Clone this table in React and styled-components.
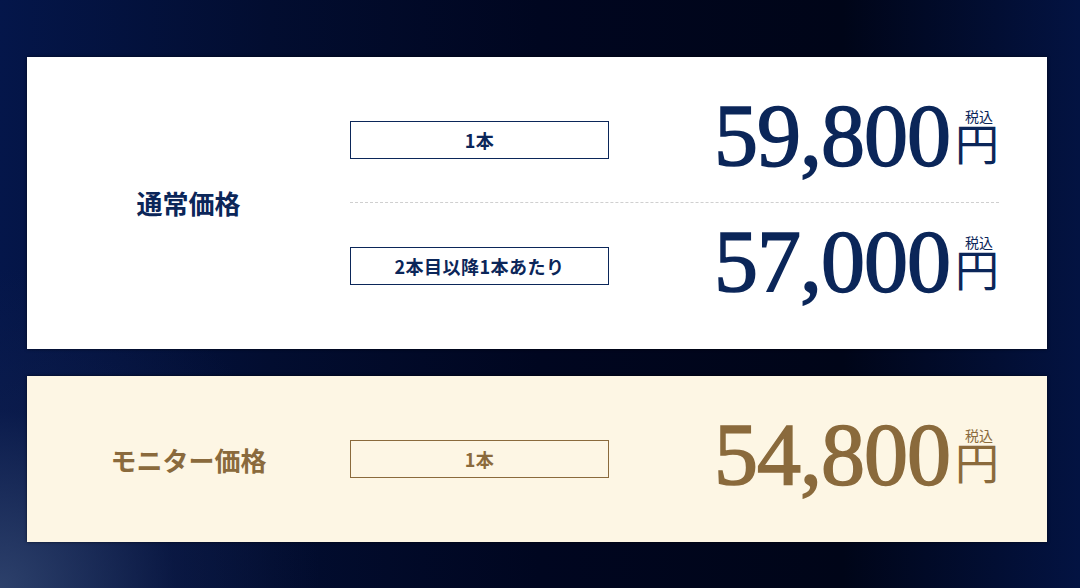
import React from 'react';
import styled, { createGlobalStyle } from 'styled-components';

const GlobalStyle = createGlobalStyle`
  html, body {
    margin: 0;
    padding: 0;
  }
  body {
    font-family: "Noto Sans CJK JP", "Noto Sans", sans-serif;
  }
`

const Page = styled.div`
  box-sizing: border-box;
  width: 1080px;
  height: 588px;
  padding: 57px 33px 0 27px;
  display: flex;
  flex-direction: column;
  gap: 27px;
  background:
    radial-gradient(ellipse 320px 320px at 0% 100%, rgba(55, 75, 115, 0.8), rgba(20, 35, 80, 0.4) 55%, rgba(0, 0, 0, 0) 100%),
    linear-gradient(90deg, #04164a 0%, #020d30 25%, #000620 50%, #000518 78%, #031342 100%);
  overflow: hidden;
`

const Card = styled.div`
  display: grid;
  grid-template-columns: 323px 1fr;
  align-items: center;
  background: ${p => p.$bg};
  padding: ${p => p.$pad};
  box-shadow: 0 0 3px rgba(0, 0, 0, 0.6);
`

const Label = styled.div`
  text-align: center;
  font-size: 26px;
  font-weight: 700;
  color: ${p => p.$color};
`

const Rows = styled.div`
  display: flex;
  flex-direction: column;
  padding-right: 48px;
`

const Row = styled.div`
  display: flex;
  align-items: center;
  justify-content: space-between;
  height: ${p => p.$h}px;
  border-top: ${p => (p.$divided ? '1px dashed #cfcfcf' : 'none')};
`

const Badge = styled.div`
  box-sizing: border-box;
  width: 259px;
  height: 38px;
  display: flex;
  align-items: center;
  justify-content: center;
  border: 1.5px solid ${p => p.$color};
  color: ${p => p.$color};
  font-size: 18px;
  font-weight: 700;
  letter-spacing: 0.5px;
  background: transparent;
`

const Price = styled.div`
  display: flex;
  align-items: flex-end;
  margin-bottom: 8px;
  color: ${p => p.$color};
`

const Amount = styled.span`
  font-family: "Liberation Serif", "Times New Roman", serif;
  font-size: 88px;
  font-weight: 400;
  -webkit-text-stroke: 1.6px currentColor;
  line-height: 70px;
  letter-spacing: -1px;
  margin-right: 5px;
`

const Unit = styled.span`
  display: flex;
  flex-direction: column;
  align-items: center;
  margin-bottom: 2px;
`

const Tax = styled.span`
  font-family: "Liberation Serif", "Noto Sans CJK JP", serif;
  font-size: 14px;
  line-height: 14px;
  padding-left: 4px;
`

const Yen = styled.span`
  font-family: "Liberation Serif", "Noto Sans CJK JP", serif;
  font-size: 44px;
  line-height: 44px;
`

const NAVY = '#0b2659'
const BROWN = '#8a6a3c'

function PriceRow({ badge, amount, color, divided, h }) {
  return (
    <Row $divided={divided} $h={h}>
      <Badge $color={color}>{badge}</Badge>
      <Price $color={color}>
        <Amount>{amount}</Amount>
        <Unit>
          <Tax>税込</Tax>
          <Yen>円</Yen>
        </Unit>
      </Price>
    </Row>
  )
}

export default function App() {
  return (
    <>
      <GlobalStyle />
      <Page>
        <Card $bg="#ffffff" $pad="20px 0 21px">
          <Label $color={NAVY}>通常価格</Label>
          <Rows>
            <PriceRow badge="1本" amount="59,800" color={NAVY} h={125} />
            <PriceRow badge="2本目以降1本あたり" amount="57,000" color={NAVY} divided h={125} />
          </Rows>
        </Card>
        <Card $bg="#fdf6e4" $pad="0">
          <Label $color={BROWN}>モニター価格</Label>
          <Rows>
            <PriceRow badge="1本" amount="54,800" color={BROWN} h={166} />
          </Rows>
        </Card>
      </Page>
    </>
  )
}
